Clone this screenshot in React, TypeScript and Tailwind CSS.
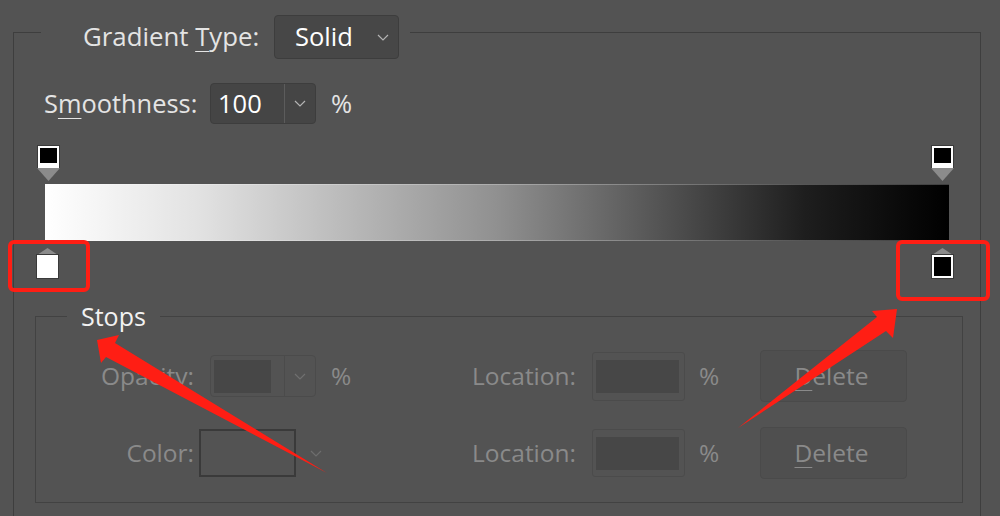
import React from 'react'

const FONT = { fontFamily: '"Open Sans", "Noto Sans", "Liberation Sans", sans-serif' }

function Chevron({ className = '' }: { className?: string }) {
  return (
    <svg width="12" height="7" viewBox="0 0 12 7" className={className}>
      <path d="M1 1 L6 6 L11 1" fill="none" stroke="currentColor" strokeWidth="1.2" />
    </svg>
  )
}

function TopStop() {
  return (
    <div className="flex flex-col items-center">
      <div className="w-[21px] h-[22px] bg-white pt-[2px] px-[2px] pb-[5px] outline outline-[#3a3a3a]">
        <div className="w-full h-full bg-black" />
      </div>
      <svg width="23" height="13" viewBox="0 0 23 13">
        <polygon points="0,0 23,0 11.5,13" fill="#8b8b8b" />
      </svg>
    </div>
  )
}

function BottomStop({ fill }: { fill: string }) {
  return (
    <div className="flex flex-col items-center">
      <svg width="23" height="7" viewBox="0 0 23 7">
        <polygon points="11.5,0 22,7 1,7" fill="#8b8b8b" />
      </svg>
      <div className="w-[21px] h-[23px] bg-white p-[2px] outline outline-[#3a3a3a]">
        <div className="w-full h-full" style={{ background: fill }} />
      </div>
    </div>
  )
}

function DisabledBox({ h }: { h: string }) {
  return (
    <div className={`w-[93px] ${h} shrink-0 flex items-center pl-[3px] pr-[5px] rounded-[3px] border border-[#4b4b4b]`}>
      <div className="flex-1 h-[33px] bg-[#474747]" />
    </div>
  )
}

function DeleteButton() {
  return (
    <div className="w-[147px] h-[52px] shrink-0 flex items-center justify-center rounded-[4px] bg-[#4f4f4f] border border-[#4a4a4a] text-[24.5px] text-[#8a8a8a]">
      <span className="-ml-[4px]">
        <span className="underline underline-offset-[5px] decoration-1">D</span>elete
      </span>
    </div>
  )
}

export default function App() {
  return (
    <div
      className="relative w-[1000px] h-[516px] overflow-hidden bg-[#535353] pt-[5px] pl-[13px] text-[#e4e4e4]"
      style={FONT}
    >
      <fieldset className="w-[968px] h-[600px] border border-[#3e3e3e]">
        <legend className="ml-[27px] pt-[10px] pl-[42px] pr-[11px]">
          <div className="flex items-center h-[44px]">
            <span className="w-[191px] shrink-0 text-[25.8px] leading-none whitespace-nowrap">
              Gradient <span className="underline underline-offset-[5px] decoration-1">T</span>ype:
            </span>
            <div className="w-[125px] h-[44px] flex items-center justify-between pl-[20px] pr-[9px] rounded-[4px] bg-[#474747] border border-[#3d3d3d]">
              <span className="text-[25.5px] leading-none text-white">Solid</span>
              <Chevron className="text-[#b4b4b4]" />
            </div>
          </div>
        </legend>

        {/* smoothness */}
        <div className="mt-[24px] ml-[30px] flex items-center h-[41px]">
          <span className="w-[166px] shrink-0 text-[25.4px] leading-none whitespace-nowrap">
            S<span className="underline underline-offset-[5px] decoration-1">m</span>oothness:
          </span>
          <div className="w-[106px] h-[41px] flex rounded-[4px] bg-[#454545] border border-[#3d3d3d]">
            <div className="w-[73px] flex items-center pl-[7px] text-[25.5px] leading-none text-white">100</div>
            <div className="flex-1 flex items-center justify-center border-l border-[#5c5c5c] text-[#b4b4b4]">
              <Chevron />
            </div>
          </div>
          <span className="ml-[15px] text-[25.5px] leading-none">%</span>
        </div>

        {/* gradient editor */}
        <div className="mt-[22px] ml-[23px] w-[917px] flex justify-between">
          <TopStop />
          <TopStop />
        </div>
        <div
          className="mt-[3px] ml-[31px] w-[904px] h-[57px] border-y border-white/25"
          style={{
            background:
              'linear-gradient(to right, #ffffff 0%, #e2e2e2 17%, #909090 50%, #1e1e1e 84%, #000000 100%)',
          }}
        />
        <div className="mt-[7px] ml-[22px] w-[918px] flex justify-between">
          <BottomStop fill="#ffffff" />
          <BottomStop fill="#000000" />
        </div>

        {/* stops */}
        <fieldset className="mt-[23px] ml-[21px] w-[928px] h-[202px] border border-[#424242]">
          <legend className="ml-[31px] px-[14px] text-[25px] leading-[30px] text-[#f2f2f2]">Stops</legend>

          <div className="mt-[19px] flex flex-col gap-[25px] text-[24.5px] leading-none text-[#8a8a8a]">
            <div className="flex items-center h-[52px]">
              <div className="w-[158px] shrink-0 text-right">Opacity:</div>
              <div className="ml-[16px] w-[106px] h-[42px] shrink-0 flex rounded-[4px] border border-[#4b4b4b]">
                <div className="w-[73px] flex items-center pl-[3px]">
                  <div className="w-[57px] h-[33px] bg-[#474747]" />
                </div>
                <div className="flex-1 flex items-center justify-center border-l border-[#4b4b4b] text-[#707070]">
                  <Chevron />
                </div>
              </div>
              <span className="ml-[15px] w-[108px] shrink-0">%</span>
              <div className="w-[137px] shrink-0 text-right">Location:</div>
              <div className="ml-[16px]">
                <DisabledBox h="h-[49px]" />
              </div>
              <span className="ml-[14px] w-[61px] shrink-0">%</span>
              <DeleteButton />
            </div>

            <div className="flex items-center h-[52px]">
              <div className="w-[158px] shrink-0 text-right">Color:</div>
              <div className="ml-[5px] w-[97px] h-[48px] shrink-0 border-2 border-[#3a3a3a]" />
              <Chevron className="ml-[14px] shrink-0 text-[#6e6e6e]" />
              <span className="w-[117px] shrink-0" />
              <div className="w-[137px] shrink-0 text-right">Location:</div>
              <div className="ml-[16px]">
                <DisabledBox h="h-[48px]" />
              </div>
              <span className="ml-[14px] w-[61px] shrink-0">%</span>
              <DeleteButton />
            </div>
          </div>
        </fieldset>
      </fieldset>

      {/* annotations */}
      <div className="absolute left-[8px] top-[240px] w-[82px] h-[52px] border-4 border-[#ff1e14] rounded-[6px]" />
      <div className="absolute left-[896px] top-[240px] w-[94px] h-[61px] border-4 border-[#ff1e14] rounded-[6px]" />
      <svg className="absolute inset-0 pointer-events-none" width="1000" height="516" viewBox="0 0 1000 516">
        <polygon points="97,340 119,335 115,343 327,473 106,357 101,363" fill="#ff1e14" />
        <polygon points="897,309 872,311 877,317 738,428 886,331 893,338" fill="#ff1e14" />
      </svg>
    </div>
  )
}
